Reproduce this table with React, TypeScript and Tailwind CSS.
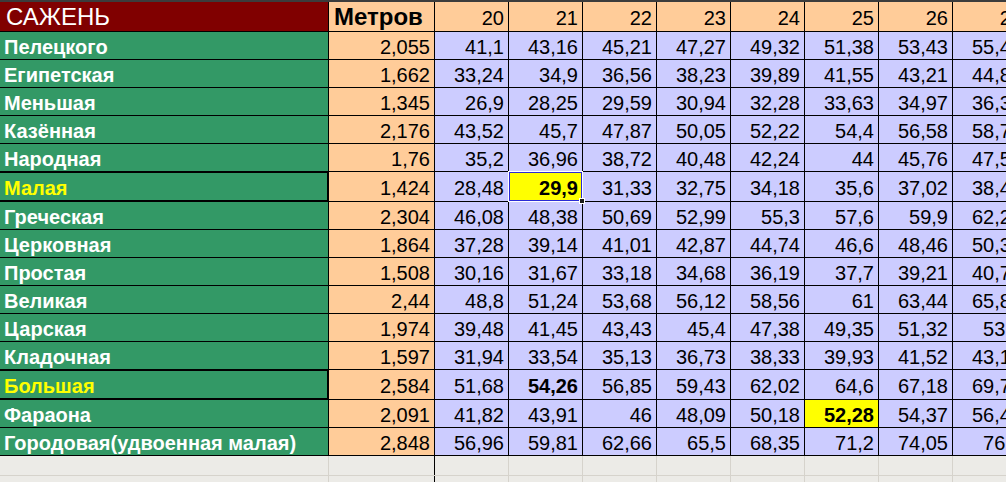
import * as React from "react";

type Row = { name: string; m: string; v: string[]; accent?: boolean };

const cols = [20, 21, 22, 23, 24, 25, 26, 27];

const rows: Row[] = [
  { name: "Пелецкого", m: "2,055", v: ["41,1", "43,16", "45,21", "47,27", "49,32", "51,38", "53,43", "55,49"] },
  { name: "Египетская", m: "1,662", v: ["33,24", "34,9", "36,56", "38,23", "39,89", "41,55", "43,21", "44,87"] },
  { name: "Меньшая", m: "1,345", v: ["26,9", "28,25", "29,59", "30,94", "32,28", "33,63", "34,97", "36,32"] },
  { name: "Казённая", m: "2,176", v: ["43,52", "45,7", "47,87", "50,05", "52,22", "54,4", "56,58", "58,75"] },
  { name: "Народная", m: "1,76", v: ["35,2", "36,96", "38,72", "40,48", "42,24", "44", "45,76", "47,52"] },
  { name: "Малая", m: "1,424", v: ["28,48", "29,9", "31,33", "32,75", "34,18", "35,6", "37,02", "38,45"], accent: true },
  { name: "Греческая", m: "2,304", v: ["46,08", "48,38", "50,69", "52,99", "55,3", "57,6", "59,9", "62,21"] },
  { name: "Церковная", m: "1,864", v: ["37,28", "39,14", "41,01", "42,87", "44,74", "46,6", "48,46", "50,33"] },
  { name: "Простая", m: "1,508", v: ["30,16", "31,67", "33,18", "34,68", "36,19", "37,7", "39,21", "40,72"] },
  { name: "Великая", m: "2,44", v: ["48,8", "51,24", "53,68", "56,12", "58,56", "61", "63,44", "65,88"] },
  { name: "Царская", m: "1,974", v: ["39,48", "41,45", "43,43", "45,4", "47,38", "49,35", "51,32", "53,3"] },
  { name: "Кладочная", m: "1,597", v: ["31,94", "33,54", "35,13", "36,73", "38,33", "39,93", "41,52", "43,12"] },
  { name: "Большая", m: "2,584", v: ["51,68", "54,26", "56,85", "59,43", "62,02", "64,6", "67,18", "69,77"], accent: true },
  { name: "Фараона", m: "2,091", v: ["41,82", "43,91", "46", "48,09", "50,18", "52,28", "54,37", "56,46"] },
  { name: "Городовая(удвоенная малая)", m: "2,848", v: ["56,96", "59,81", "62,66", "65,5", "68,35", "71,2", "74,05", "76,9"] },
];

// cells that are bold / yellow in the sheet
const bold = new Set(["Малая:21", "Большая:21", "Фараона:25"]);
const yellow = new Set(["Малая:21", "Фараона:25"]);
const selected = "Малая:21";

function DataCell({ row, col, value }: { row: Row; col: number; value: string }) {
  const key = `${row.name}:${col}`;
  return (
    <div
      className={`relative shrink-0 w-[74px] h-full flex items-center justify-end pr-[4px] pt-[3px] border-r border-black ${
        yellow.has(key) ? "bg-[#ffff00]" : "bg-[#ccccff]"
      } ${bold.has(key) ? "font-bold" : ""}`}
    >
      {value}
      {key === selected && (
        <>
          <div className="absolute inset-[0px] border border-[#2b2bd6] outline outline-1 outline-white" />
          <div className="absolute -right-[3px] -bottom-[3px] w-[6px] h-[6px] bg-[#1a1a1a] border border-white z-10" />
        </>
      )}
    </div>
  );
}

export default function App() {
  return (
    <div className="w-[1006px] h-[482px] overflow-hidden bg-[#ecebe7] font-['Liberation_Sans',Arial,sans-serif] text-[20px] text-black border-t-2 border-[#3c3c3c]">
      {/* header */}
      <div className="flex h-[30px] border-b border-black">
        <div className="shrink-0 w-[329px] bg-[#800000] text-white text-[24px] flex items-center pl-[6px] pt-[1px] border-r border-black">
          САЖЕНЬ
        </div>
        <div className="shrink-0 w-[106px] bg-[#ffcc99] font-bold text-[24px] flex items-center pl-[5px] pt-[1px] border-r border-black">
          Метров
        </div>
        {cols.map((c) => (
          <div
            key={c}
            className="shrink-0 w-[74px] bg-[#ffcc99] flex items-center justify-end pr-[4px] pt-[2px] border-r border-black"
          >
            {c}
          </div>
        ))}
      </div>

      {/* rows */}
      {rows.map((row) => (
        <div
          key={row.name}
          className={`flex border-b border-black ${row.accent ? "h-[30px]" : "h-[28px]"}`}
        >
          <div
            className={`shrink-0 w-[329px] h-full bg-[#339966] font-bold flex items-center pl-[4px] pt-[2px] border-black ${
              row.accent ? "text-[#ffff00] border-t border-b border-r-2" : "text-white border-r"
            }`}
          >
            {row.name}
          </div>
          <div className="shrink-0 w-[106px] h-full bg-[#ffcc99] flex items-center justify-end pr-[4px] pt-[3px] border-r border-black">
            {row.m}
          </div>
          {row.v.map((val, i) => (
            <DataCell key={i} row={row} col={cols[i]} value={val} />
          ))}
        </div>
      ))}

      {/* empty sheet rows below */}
      {[0, 1].map((i) => (
        <div key={i} className="flex h-[20px] border-b border-[#d6d3cc]">
          <div className="shrink-0 w-[329px] border-r border-[#d6d3cc]" />
          <div className="shrink-0 w-[106px] border-r border-black" />
          {cols.map((c) => (
            <div key={c} className="shrink-0 w-[74px] border-r border-[#d6d3cc]" />
          ))}
        </div>
      ))}
    </div>
  );
}
